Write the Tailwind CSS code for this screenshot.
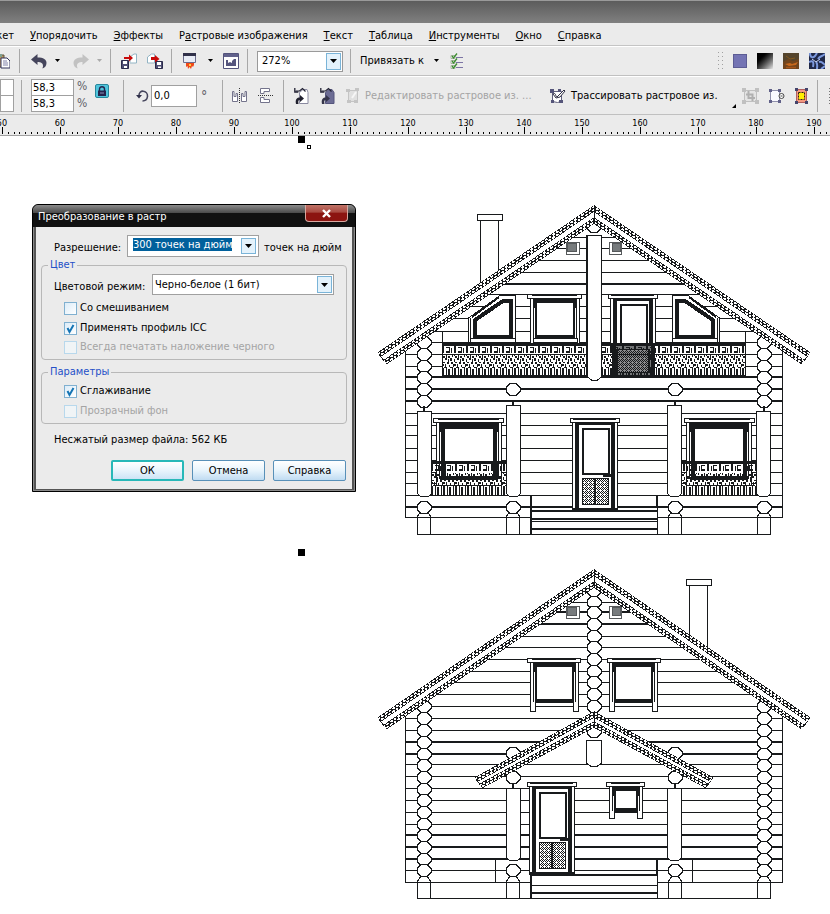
<!DOCTYPE html>
<html lang="ru">
<head>
<meta charset="utf-8">
<title>Преобразование в растр</title>
<script src="https://cdn.jsdelivr.net/npm/@tailwindcss/browser@4"></script>
</head>
<body class="flex min-h-screen flex-col overflow-x-hidden bg-white font-['DejaVu_Sans_Condensed','DejaVu_Sans',sans-serif] text-[11px] leading-4 text-black">
<header class="bg-[#ebebeb]">
  <div class="h-[23px] border-t border-[#9a9a9a] bg-linear-to-b from-[#5c5c5c] to-[#808080]"></div>
  <nav class="flex h-[23px] items-center gap-4 overflow-hidden border-b border-[#c4c4c4] pt-1 whitespace-nowrap" aria-label="Меню">
    <button class="flex w-3.5 justify-end">Макет</button>
    <button><u>У</u>порядочить</button>
    <button><u>Э</u>ффекты</button>
    <button>Р<u>а</u>стровые изображения</button>
    <button><u>Т</u>екст</button>
    <button><u>Т</u>аблица</button>
    <button><u>И</u>нструменты</button>
    <button><u>О</u>кно</button>
    <button><u>С</u>правка</button>
  </nav>

  <div class="flex h-[30px] items-center overflow-hidden border-t border-b border-t-white border-b-[#c0c0c0] whitespace-nowrap">
    <button class="w-[19px]" aria-label="Вставить"><svg class="-ml-1.5" width="16" height="16" viewBox="0 0 16 16"><path d="M1 2h9v12H1z" fill="#b9935c" stroke="#5b5540"/><path d="M3 1h5v3H3z" fill="#7fa08e"/><path d="M7 5h6l3 3v7H7z" fill="#fff" stroke="#33335a"/><path d="M9 8h4M9 10h5M9 12h5" stroke="#8080a8"/></svg></button>
    <span class="h-6 w-px bg-[#a8a8a8]"></span>
    <button class="ml-2.5" aria-label="Отменить"><svg width="18" height="16" viewBox="0 0 18 16"><path d="M1 6.500 7.500 1v3.500c6 0 9 2 9 5.500 0 3-2 5-4 5.500 0-1 .5-1.500.5-2.500C13 10 11 9 7.500 9v3z" fill="#45455c"/></svg></button>
    <button class="ml-1.5 w-3" aria-label="Список отмены"><svg width="7" height="4" viewBox="0 0 7 4"><path d="M1 0h5L3.500 3z"/></svg></button>
    <button class="ml-1.5 text-[#c2c2c2]" aria-label="Повторить"><svg width="18" height="16" viewBox="0 0 18 16"><path d="M17 6.500 10.500 1v3.500c-6 0-9 2-9 5.500 0 3 2 5 4 5.500 0-1-.5-1.500-.5-2.500C5 10 7 9 10.500 9v3z" fill="currentColor"/></svg></button>
    <button class="ml-1.5 w-3" aria-label="Список повтора"><svg width="7" height="4" viewBox="0 0 7 4"><path d="M1 0h5L3.500 3z" fill="#aaa"/></svg></button>
    <span class="ml-0.5 h-6 w-px bg-[#a8a8a8]"></span>
    <button class="ml-2.5" aria-label="Импорт"><svg width="16" height="16" viewBox="0 0 16 16"><path d="M9 9.500V4l4-3h2.500v9H9" fill="#fff" stroke="#92b4c4"/><path d="M.5 7.500h7v8h-7z" fill="#4f4f74" stroke="#2b2b4b"/><path d="M2 8h4v3H2zM3 13h3v2H3z" fill="#fff"/><path d="M3 4h5V1.500L12 5 8 8.500V6H3z" fill="#c80a0a"/></svg></button>
    <button class="ml-2.5" aria-label="Экспорт"><svg width="16" height="16" viewBox="0 0 16 16"><path d="M.5 10V4l4-3h3v9z" fill="#fff" stroke="#92b4c4"/><path d="M8.500 8.500h7v7h-7z" fill="#4f4f74" stroke="#2b2b4b"/><path d="M10 9h4v3h-4zM11 13.500h3v1.500h-3z" fill="#fff"/><path d="M4 4h4V2l4.500 4L8 9.500V7H4z" fill="#c80a0a"/></svg></button>
    <span class="ml-2 h-6 w-px bg-[#a8a8a8]"></span>
    <button class="ml-2.5" aria-label="Запуск приложений"><svg width="16" height="16" viewBox="0 0 16 16"><path d="M1.500.5h12v9h-12z" fill="#e8ecf6" stroke="#6c6c8c"/><path d="M1 0h13v3H1z" fill="#31314a"/><path d="M4 10h8v2l-1 2-1-1-1 3-1.500-2L6 16l-.5-3-1.500 1z" fill="#f04818"/><path d="M7 11h2v2H7z" fill="#ffd040"/></svg></button>
    <button class="ml-1.5 w-3" aria-label="Список приложений"><svg class="mx-auto" width="7" height="4" viewBox="0 0 7 4"><path d="M1 0h5L3.500 3z"/></svg></button>
    <button class="ml-[7px]" aria-label="Экран приветствия"><svg width="16" height="16" viewBox="0 0 16 16"><path d="M.5.500h15v15H.5z" fill="#fff" stroke="#54547c"/><path d="M1 1h14v3H1z" fill="#62628c"/><path d="M3 7h2v3l2-1 2 1V8l2-2h2v7H3z" fill="#55557d"/></svg></button>
    <span class="ml-2 h-6 w-px bg-[#a8a8a8]"></span>
    <label class="relative ml-[9px] flex">
      <select class="h-[21px] w-[86px] appearance-none border border-[#9a9a9a] bg-white pl-1" aria-label="Масштаб"><option>272%</option></select>
      <span class="pointer-events-none absolute top-0.5 right-0.5 grid h-[17px] w-[15px] place-items-center border border-[#7ab4d8] bg-[#e4f2fb]"><svg width="7" height="4" viewBox="0 0 7 4"><path d="M0 0h7L3.500 4z"/></svg></span>
    </label>
    <span class="ml-[7px] h-6 w-px bg-[#a8a8a8]"></span>
    <button class="ml-[9px] flex w-20 items-center justify-between">Привязать к <svg width="7" height="4" viewBox="0 0 7 4"><path d="M1 0h5L3.500 3z"/></svg></button>
    <button class="ml-2.5" aria-label="Параметры"><svg width="14" height="16" viewBox="0 0 14 16"><path d="M6 4.500h7M6 9.500h7M6 14.500h7" stroke="#7c74a4"/><path d="M1 2.500h4v3H1zM1 7.500h4v3H1zM1 12.500h4v3H1z" fill="#fff" stroke="#a8b4a0"/><path d="m2 3 1.500 2L7 .5M2 8l1.500 2L7 5.500M2 13l1.500 2L7 10.500" fill="none" stroke="#3c8c30" stroke-width="1.300"/></svg></button>
    <div class="ml-auto flex items-center pr-[5px]">
      <svg class="mr-2.5" width="5" height="18" viewBox="0 0 5 18"><path d="M.5 0v18M4.500 0v18" stroke="#a0a0a0" stroke-dasharray="1 3"/></svg>
      <button class="mr-2.5 size-3.5 border border-[#5c5c94] bg-[#7474b4]" aria-label="Однородная заливка"></button>
      <button class="mr-2.5 size-4 bg-linear-to-br from-black from-20% to-[#e8e8e8]" aria-label="Градиентная заливка"></button>
      <button class="mr-2.5" aria-label="Заливка узором"><svg width="16" height="16" viewBox="0 0 16 16"><path d="M0 0h16v16H0z" fill="#71441c"/><path d="M0 0h16v6L10 8 5 6 0 9z" fill="#54442c"/><path d="m2 11 5-1 2 1 6-2-2 3-7 1z" fill="#c8681c"/><path d="M3 14.500h10" stroke="#a85418" stroke-width="1.500"/><path d="m3 3 4 3 5-1" stroke="#84581c" fill="none"/></svg></button>
      <button aria-label="Заливка текстурой"><svg width="16" height="16" viewBox="0 0 16 16"><path d="M0 0h16v16H0z" fill="#202848"/><path d="M1 0c0 5 3 5 5 3l2-3M0 9c4-2 5 0 4 5M9 6c2-3 3-2 7-5M10 9c4-1 4 3 6 2M8 16c0-3 1-5-1-7M12 16l4-3" fill="none" stroke="#7c98dc" stroke-width="2"/><path d="M3 6l4 3 4-3" fill="none" stroke="#ccd8fa"/></svg></button>
    </div>
  </div>

  <div class="flex h-[39px] items-center overflow-hidden border-t border-b border-t-white border-b-[#c0c0c0] whitespace-nowrap">
    <div class="flex w-3.5 flex-col">
      <input class="h-[17px] border border-[#a0a0a0] bg-white" aria-label="Ширина">
      <input class="-mt-px h-[17px] border border-[#a0a0a0] bg-white" aria-label="Высота">
    </div>
    <span class="ml-[7px] h-8 w-px bg-[#a8a8a8]"></span>
    <div class="ml-[9px] flex flex-col">
      <input class="h-[17px] w-[43px] border border-[#a0a0a0] bg-white pl-px" value="58,3" aria-label="Масштаб по ширине">
      <input class="-mt-px h-[17px] w-[43px] border border-[#a0a0a0] bg-white pl-px" value="58,3" aria-label="Масштаб по высоте">
    </div>
    <div class="mb-0.5 ml-[3px] w-[18px] text-[12px] leading-[17px] text-[#606068]"><div>%</div><div>%</div></div>
    <button class="mb-2.5 grid size-3.5 place-items-center rounded-xs border border-[#28889c] bg-[#50c4dc]" aria-label="Сохранять пропорции"><svg width="10" height="10" viewBox="0 0 10 10"><path d="M1 4.500h8V10H1z" fill="#24244c"/><path d="M2.500 5V3a2.500 2.300 0 0 1 5 0v2" fill="none" stroke="#24244c" stroke-width="1.400"/><path d="M3 7h4" stroke="#8890b8"/></svg></button>
    <span class="ml-3.5 h-8 w-px bg-[#a8a8a8]"></span>
    <svg class="ml-3" width="13" height="14" viewBox="0 0 13 14"><path d="M3 7c-.5-7 9-6 8.500.5C11 11 8.500 12 6.500 12" fill="none" stroke="#45455c" stroke-width="1.600"/><path d="M0 6h6L3 9.500z" fill="#30304a"/></svg>
    <input class="ml-0.5 h-[22px] w-[46px] border border-[#a0a0a0] bg-white pl-0.5" value="0,0" aria-label="Угол поворота">
    <span class="ml-1 w-[21px] text-[14px] text-[#606068]">°</span>
    <span class="h-8 w-px bg-[#a8a8a8]"></span>
    <button class="ml-[9px]" aria-label="Отразить по горизонтали"><svg width="16" height="16" viewBox="0 0 16 16"><path d="M7.500 0v16" stroke="#333" stroke-dasharray="1 1"/><path d="M.5 3.500H2v5h2v-3h1.500v8h-5zM14.500 3.500H13v5h-2v-3H9.500v8h5z" fill="#fff" stroke="#74748c"/></svg></button>
    <button class="ml-2.5" aria-label="Отразить по вертикали"><svg width="16" height="16" viewBox="0 0 16 16"><path d="M0 7.500h16" stroke="#333" stroke-dasharray="1 1"/><path d="M2.500.5h9v3H6v2H2.500zM2.500 9.500H6v2h5.500v3h-9z" fill="#fff" stroke="#74748c"/></svg></button>
    <span class="ml-[9px] h-8 w-px bg-[#a8a8a8]"></span>
    <button class="ml-2.5" aria-label="Преобразовать"><svg width="16" height="18" viewBox="0 0 16 18"><path d="M5.500 5.500 9 2.500h4l1 3v11H5.500z" fill="#fff" stroke="#8a8aa0"/><path d="m1.500 4 4 0 3-2.500 3 3" fill="none" stroke="#222234" stroke-width="1.200"/><path d="M.8 1v4h3.500" fill="none" stroke="#222234" stroke-width="1.300"/><path d="M2 17c-1-5 1-6.500 4-6.500V8l4 3.500L6 15v-2c-2 0-2 1-1.500 4z" fill="#20202e"/></svg></button>
    <button class="ml-2.5" aria-label="В растр"><svg width="16" height="18" viewBox="0 0 16 18"><path d="M5.500 5.500 9 2.500h3l2 3v11H5.500z" fill="#6c6c94" stroke="#55557c"/><path d="m1.500 4 4 0 3-2.500 3 3" fill="none" stroke="#222234" stroke-width="1.200"/><path d="M.8 1v4h3.500" fill="none" stroke="#222234" stroke-width="1.300"/><path d="M2 17c-1-5 1-6.500 4-6.500V8l4 3.500L6 15v-2c-2 0-2 1-1.500 4z" fill="#35354a"/></svg></button>
    <button class="ml-2.5 flex w-[190px] items-center gap-1 text-[#a4a4a4]"><svg width="15" height="16" viewBox="0 0 15 16"><path d="M2.500 2.500h9v11h-9z" fill="#e0e0e0" stroke="#c4c4c4"/><path d="M0 1h4v3H0zM9 0h4v3H9zM1 12h4v3H1zM8 12h4v3H8z" fill="#c4c4c4"/><path d="m6 10 4-6" stroke="#f6f6f6" stroke-width="2"/></svg>Редактировать растровое из. ...</button>
    <button class="ml-[13px] flex items-center gap-1"><svg width="18" height="18" viewBox="0 0 18 18"><path d="M3.500 4.500h9v10l-4 1-5-1z" fill="#fff" stroke="#60607c"/><path d="M1 2h4v4H1zM9 2h3v3H9zM2 13h3v3H2zM10 13h4v3h-4z" fill="#55557a"/><path d="M4 7c3-2 2 2 4 3l7-7 1 1-5 6-4 1z" fill="#fff" stroke="#303044"/></svg>Трассировать растровое из.</button>
    <div class="ml-auto flex items-center">
      <svg class="mt-5 mr-1.5" width="4" height="4" viewBox="0 0 4 4"><path d="M4 0v4H0z"/></svg>
      <button class="mr-2.5" aria-label="Обрезать"><svg width="17" height="16" viewBox="0 0 17 16"><path d="M2.500 2.500h12v11h-12z" fill="#e4e4e4" stroke="#c0c0c0"/><path d="M0 0h4v4H0zM13 0h4v4h-4zM0 12h4v4H0zM13 12h4v4h-4z" fill="#c0c0c0"/><path d="M6.500 3v7H13M4 6.500h6.500V13" fill="none" stroke="#b0b0b0" stroke-width="2"/></svg></button>
      <button class="mr-2.5" aria-label="Цветовая маска"><svg width="16" height="16" viewBox="0 0 16 16"><path d="M1.500 2.500h9v11h-9z" fill="#fafaff" stroke="#9090ac"/><path d="M0 1h3v3H0zM9 1h3v3H9zM0 12h3v3H0zM9 12h3v3H9z" fill="#606088"/><path d="M12.500 5.500a2.500 2.500 0 1 1 0 5 2.500 2.500 0 0 1 0-5m-1 2.500h2" fill="#fff" stroke="#444"/></svg></button>
      <button class="mr-[9px]" aria-label="Контур"><svg width="13" height="16" viewBox="0 0 13 16"><path d="M1.500 1.500h10v13h-10z" fill="#f49880" stroke="#b06060"/><path d="M0 0h3v3H0zM10 0h3v3h-3zM0 13h3v3H0zM10 13h3v3h-3z" fill="#44446c"/><path d="M3.500 4.500h6v7h-6z" fill="#ffee00" stroke="#302010" stroke-dasharray="2 1"/></svg></button>
      <span class="h-8 w-px bg-[#a8a8a8]"></span>
      <svg class="ml-[11px]" width="1" height="16" viewBox="0 0 1 16"><path d="M.5 0v16" stroke="#777" stroke-dasharray="1 2"/></svg>
    </div>
  </div>
  <div class="h-[21px] overflow-hidden border-b border-[#a0a0a0]">
    <svg id="ruler" class="block text-[9px]" width="1640" height="20" viewBox="0 0 1640 20" shape-rendering="crispEdges" aria-label="Линейка"></svg>
  </div>
</header>

<main class="relative flex-1 overflow-hidden">
  <svg id="drawing" class="block" width="830" height="776" viewBox="0 136 830 776" aria-label="Фасады дома"></svg>

  <section role="dialog" aria-labelledby="dlg" class="absolute top-[68px] left-8 w-[324px] rounded-t-md border border-black bg-[#555] pb-0.5 whitespace-nowrap shadow-[inset_0_0_0_1px_#8a8a8a]">
    <div class="flex h-[22px] justify-between rounded-t-md bg-linear-to-b from-[#8c8c8c] via-[#4c4c4c] via-35% to-[#111] to-36% pl-[5px] text-white">
      <h1 id="dlg" class="mt-1">Преобразование в растр</h1>
      <button class="mr-[7px] grid h-[17px] w-[43px] place-items-center rounded-b-sm border border-t-0 border-[#d8a8a0] bg-linear-to-b from-[#c07468] via-[#a84840] via-45% to-[#8c1410] to-50%" aria-label="Закрыть"><svg width="11" height="9" viewBox="0 0 11 9"><path d="m2 1 7 7m0-7-7 7" stroke="#fff" stroke-width="2.400"/></svg></button>
    </div>
    <form class="mx-[3px] bg-[#ebebeb] px-[5px] pt-2 pb-2">
      <div class="flex h-[22px] items-center pl-[13px]">
        <label for="res" class="mt-1 w-[73px]">Разрешение:</label>
        <div class="flex h-[22px] w-[132px] border border-[#a0a0a0] bg-white p-0.5">
          <input id="res" class="ml-[3px] h-[13px] w-[99px] bg-[#00609c] text-white outline-none" value="300 точек на дюйм">
          <button type="button" class="ml-auto grid h-4 w-[15px] place-items-center border border-[#7ab4d8] bg-[#e4f2fb]" aria-label="Список разрешений"><svg width="7" height="4" viewBox="0 0 7 4"><path d="M0 0h7L3.500 4z"/></svg></button>
        </div>
        <span class="mt-1 ml-[5px]">точек на дюйм</span>
      </div>
      <fieldset class="h-[103px] rounded border border-[#b8b8b8] pl-3">
        <legend class="-ml-1.5 px-0.5 text-[#2450c8]">Цвет</legend>
        <div class="mt-px flex items-center gap-2">
          <label for="mode" class="w-[90px] pt-1">Цветовой режим:</label>
          <div class="relative flex">
            <select id="mode" class="h-[21px] w-[182px] appearance-none border border-[#a0a0a0] bg-white pl-0.5"><option>Черно-белое (1 бит)</option></select>
            <span class="pointer-events-none absolute top-0.5 right-0.5 grid h-[17px] w-[15px] place-items-center border border-[#7ab4d8] bg-[#e4f2fb]"><svg width="7" height="4" viewBox="0 0 7 4"><path d="M0 0h7L3.500 4z"/></svg></span>
          </div>
        </div>
        <label class="mt-[5px] ml-2.5 flex h-4 items-center gap-[3px]"><input type="checkbox" class="size-[13px] appearance-none border border-[#80b0d0] bg-linear-to-br from-[#dcecf8] to-white">Со смешиванием</label>
        <label class="mt-1 ml-2.5 flex h-4 items-center gap-[3px]"><span class="grid"><input type="checkbox" checked class="col-start-1 row-start-1 size-[13px] appearance-none border border-[#80b0d0] bg-linear-to-br from-[#dcecf8] to-white"><svg class="pointer-events-none col-start-1 row-start-1" width="13" height="13" viewBox="0 0 13 13"><path d="m3.500 6 2 4 4-7" fill="none" stroke="#1474b4" stroke-width="2"/></svg></span>Применять профиль ICC</label>
        <label class="mt-[3px] ml-2.5 flex h-4 items-center gap-[3px] text-[#a4a4a4]"><input type="checkbox" disabled class="size-[13px] appearance-none border border-[#b8d8ec] bg-[#f0f4f6]">Всегда печатать наложение черного</label>
      </fieldset>
      <fieldset class="mt-1 h-[60px] rounded border border-[#b8b8b8] pl-3">
        <legend class="-ml-1.5 px-0.5 text-[#2450c8]">Параметры</legend>
        <label class="mt-[3px] ml-2.5 flex h-4 items-center gap-[3px]"><span class="grid"><input type="checkbox" checked class="col-start-1 row-start-1 size-[13px] appearance-none border border-[#80b0d0] bg-linear-to-br from-[#dcecf8] to-white"><svg class="pointer-events-none col-start-1 row-start-1" width="13" height="13" viewBox="0 0 13 13"><path d="m3.500 6 2 4 4-7" fill="none" stroke="#1474b4" stroke-width="2"/></svg></span>Сглаживание</label>
        <label class="mt-1 ml-2.5 flex h-4 items-center gap-[3px] text-[#a4a4a4]"><input type="checkbox" disabled class="size-[13px] appearance-none border border-[#b8d8ec] bg-[#f0f4f6]">Прозрачный фон</label>
      </fieldset>
      <p class="mt-2 pl-[13px]">Несжатый размер файла: 562 КБ</p>
      <div class="mt-3 flex justify-end gap-2 pr-px">
        <button type="button" class="h-[21px] w-[73px] rounded-xs border-2 border-[#28b8b8] bg-linear-to-b from-white via-[#e8f4fc] via-50% to-[#cce4f6]">ОК</button>
        <button type="button" class="h-[21px] w-[73px] rounded-xs border border-[#5890b8] bg-linear-to-b from-white via-[#e8f4fc] via-50% to-[#c0dcf2]">Отмена</button>
        <button type="button" class="h-[21px] w-[73px] rounded-xs border border-[#5890b8] bg-linear-to-b from-white via-[#e8f4fc] via-50% to-[#c0dcf2]">Справка</button>
      </div>
    </form>
  </section>
</main>

<script>
// Ruler: one tick per millimetre, a label every ten
let r = '';
for (let u = 49; u < 330; u++) {
  const x = Math.round(2 + (u - 50) * 5.8), major = u % 10 === 0;
  r += `<path d="M${x + .5} ${major ? 12 : 17}V19" stroke="#000"/>`;
  if (major) r += `<text x="${x}" y="11" text-anchor="middle">${u}</text>`;
}
document.getElementById('ruler').innerHTML = r;

const INK = '#181a1c', AXIS = 594;
const out = [];
const add = s => out.push(s);
const rect = (x1, y1, x2, y2, w = 1, fill = '#fff', ink = INK) =>
  add(`<rect x="${x1 + .5}" y="${y1 + .5}" width="${x2 - x1}" height="${y2 - y1}" fill="${fill}" stroke="${ink}" stroke-width="${w}"/>`);
const path = (d, w = 1, fill = 'none') => add(`<path d="${d}" fill="${fill}" stroke="${INK}" stroke-width="${w}"/>`);
const h = (x1, x2, y, w = 1) => add(`<path d="M${x1} ${w === 2 ? y : y + .5}H${x2}" stroke="${INK}" stroke-width="${w}"/>`);
const v = (x, y1, y2, w = 1) => add(`<path d="M${w === 2 ? x : x + .5} ${y1}V${y2}" stroke="${INK}" stroke-width="${w}"/>`);
const log = (x, y) => path(`M${x - 3} ${y - 5.5}h6l4 4v4l-4 4h-6l-4-4v-4z`, 1, '#fff');
const mirror = f => { f(); add(`<g transform="matrix(-1 0 0 1 ${AXIS * 2} 0)">`); f(); add('</g>'); };

function siding(lines, thick, top, slope, eave) {
  for (const y of lines) {
    const half = y < eave ? (y - top) / slope : 189;
    h(AXIS - Math.min(half, 189), AXIS + Math.min(half, 189), y, thick.includes(y) ? 2 : 1);
  }
}
// Two rows of round tiles on each edge of a sloping rafter
function roof(ay, ex, ey, wide) {
  const P = dy => `M${ex + dy * .5} ${ey + dy * .62}L${AXIS} ${ay + dy}L${AXIS * 2 - ex - dy * .5} ${ey + dy * .62}`;
  path(`M${ex} ${ey}L${AXIS} ${ay}L${AXIS * 2 - ex} ${ey}l-7 9L${AXIS} ${ay + wide}L${ex + 7} ${ey + 9}z`, 1, '#fff');
  for (const [dy, off] of [[1, 0], [4, 2], [wide - 3, 1], [wide, 3]]) {
    add(`<path d="${P(dy)}" fill="none" stroke="${INK}" stroke-width="3"/>`);
    add(`<path d="${P(dy)}" fill="none" stroke="#fff" stroke-width="1.800" stroke-linecap="round" stroke-dasharray="1.200 3.200" stroke-dashoffset="${off}"/>`);
  }
  v(AXIS, ay - 1, ay + wide + 2);
}
function vent(y) {
  rect(566, y, 579, y + 12, 1, '#fff', '#55585a'); rect(567, y + 1, 576, y + 9, 1, '#777b7d', '#55585a');
  rect(609, y, 621, y + 12, 1, '#fff', '#55585a'); rect(612, y + 1, 620, y + 9, 1, '#777b7d', '#55585a');
}
function chimney(x, y, bottom) { rect(x + 3, y + 6, x + 21, bottom); rect(x, y, x + 25, y + 6); }
function squareWindow(x1, y1, x2, y2, legs, frame) {
  rect(x1 + 1, y1 + 4, x2 - 1, y2 + (legs ? 0 : 6));
  if (legs) { rect(x1 + 1, y1 + 4, x1 + 6, y2 + legs); rect(x2 - 6, y1 + 4, x2 - 1, y2 + legs); }
  add(`<rect x="${x1 + 4}" y="${y1 + 4}" width="${x2 - x1 - 7}" height="${y2 - y1 - 4}" fill="${INK}"/>`);
  add(`<rect x="${x1 + 4 + frame}" y="${y1 + 5 + frame}" width="${x2 - x1 - 7 - frame * 2}" height="${y2 - y1 - 8 - frame}" fill="#fff"/>`);
  add(`<path d="M${x1 + 5.500} ${y1 + 14}V${y2}M${x2 - 4.500} ${y1 + 14}V${y2}" stroke="#fff"/>`);
  rect(x1 - 2, y1, x2 + 1, y1 + 4); h(x1 + 3, x2 - 3, y1 + 1, 2);
}
function door(x, y, bottom, panel = true) {
  rect(x, y + 4, x + 45, bottom);
  add(`<path d="M${x + 5} ${y + 5}V${bottom}M${x + 41} ${y + 5}V${bottom}" stroke="${INK}" stroke-width="4"/>`);
  h(x, x + 45, bottom - 1, 2); h(x + 4, x + 42, y + 6, 2);
  rect(x - 2, y, x + 47, y + 4); h(x + 1, x + 44, y + 1, 2);
  rect(x + 10, y + 10, x + 36, y + 55, 2);
  if (!panel) return;
  h(x + 31, x + 41, y + 57, 3);
  rect(x + 10, y + 60, x + 36, y + 86, 1, 'url(#weave)'); v(x + 23, y + 60, y + 86, 2);
}
function post(x, y1, y2) {
  v(x + 7, y1 - 5, y1, 2);
  path(`M${x + .5} ${y1 + .5}h14v${y2 - y1 - 2}l-3 3h-8l-3-3z`, 1, '#fff');
}
function foot(x, y, base, floor) {
  rect(x, base, x + 13, floor);
  path(`M${x} ${base}l4-6h6l4 6`, 1, '#fff'); log(x + 7, y);
}

const balusters = `<path d="M0 0h2v7H0zM4 1h3v1H4zM4 5h3v2H4zM7 1h1v6H7zM9 2h1v5H9zM0 9h1v1H0zM1 10h2v2H1zM4 9h1v3H4zM6 10h2v2H6zM10 9h1v2h-1zM0 13h1v3H0zM3 12h2v2H3zM6 13h1v3H6zM8 12h2v3H8zM1 16h2v1H1zM5 16h2v2H5zM9 16h2v2H9zM0 18h2v2H0zM3 18h1v3H3zM7 19h1v2H7zM11 18h1v3h-1zM0 22h2v9H0zM4 21h1v10H4zM6 23h2v8H6zM10 21h1v10h-1zM2 21h2v1H2zM8 21h2v1H8z" fill="${INK}"/>`;
add(`<defs>
 <pattern id="weave" width="4" height="4" patternUnits="userSpaceOnUse"><path d="M0 0h4v4H0z" fill="#fff"/><path d="M0 0h1v1H0zM1 1h1v1H1zM2 2h1v1H2zM3 3h1v1H3zM3 1h1v1H3zM1 3h1v1H1zM2 0h1v1H2z" fill="${INK}"/></pattern>
 <pattern id="balcony" x="442" y="346" width="12" height="31" patternUnits="userSpaceOnUse"><path d="M0 0h12v31H0z" fill="#fff"/>${balusters}</pattern>
 <pattern id="porch" x="431" y="464" width="12" height="31" patternUnits="userSpaceOnUse">${balusters}</pattern>
</defs><g shape-rendering="crispEdges">`);

// ---- Front elevation
chimney(477, 214, 285);
siding([237,248,260,272,284,294,306,318,331,342,354,366,377,389,401,413,425,435,448,460,472,483,495,507,517],
       [284,377,389,401,507], 217, .69, 346);
v(405, 349, 517); v(782, 349, 517);
h(417, 771, 534);
mirror(() => {
  for (const y of [342,354,366,377,389,401]) log(424, y);
  path('M468.500 342V318L500 295.500H515.500V342z', 1, '#fff');
  v(470, 318, 342);
  path('M475 337V320L503 301H511V337z', 4, '#fff');
  path('M472 317l27-20', 2);
  rect(470, 338, 515, 342);
});
squareWindow(529, 294, 580, 338, 0, 4); rect(533, 338, 577, 342);
door(610, 294, 377, false);
vent(242);
add('<rect x="442" y="346" width="304" height="31" fill="url(#balcony)"/>');
add('<rect x="612" y="346" width="43" height="31" fill="#181a1c" fill-opacity=".6"/>');
add('<rect x="616" y="349" width="34" height="24" fill="#181a1c"/><rect x="618" y="350" width="30" height="22" fill="url(#weave)" opacity=".5"/>');
v(613, 346, 377, 4); v(652, 346, 377, 4);
h(442, 746, 344, 3); h(442, 746, 376, 2); h(442, 746, 354); v(442, 331, 377); v(745, 331, 377);
path('M587.500 235.500H601.500V377l-4 3h-6l-4-3z', 1, '#fff'); v(587, 235, 377, 2);
log(594, 226);
mirror(() => {
  log(513, 389);
  squareWindow(435, 418, 502, 479, 0, 6);
  add('<rect x="431" y="464" width="75" height="31" fill="url(#porch)"/>');
  v(443, 464, 480, 4); v(495, 464, 480, 4); h(440, 497, 478, 3);
  h(431, 508, 462, 3); h(431, 506, 495);
  post(417, 411, 495); post(506, 405, 495);
  h(405, 531, 517);
  foot(417, 507, 517, 534); foot(506, 507, 517, 534);
  v(531, 495, 534, 2); v(519, 517, 534);
});
add('<rect x="532" y="508" width="125" height="26" fill="#fff"/>');
h(531, 657, 511, 2); h(531, 657, 519, 2); h(531, 657, 521); h(531, 657, 529, 2); h(531, 657, 534);
door(572, 418, 510);
roof(206, 378, 353, 16);

// ---- Rear elevation
chimney(686, 579, 650);
siding([602,612,624,636,647,659,671,682,694,706,718,730,742,754,764,776,788,800,812,824,835,847,859,870,882],
       [612,624,742,754,835,847,859], 582, .69, 712);
v(405, 714, 882); v(782, 714, 882);
h(417, 771, 898);
for (const y of [590,602,612,624,636,647,659,671,682,694,706]) log(594, y);
mirror(() => {
  for (const y of [706,718,730,742,754,765,777,789,800,812,824,835,847,859,870]) log(424, y);
  squareWindow(529, 658, 579, 702, 9, 4);
  log(513, 753);
});
vent(606);
path('M482 788L594 722L706 788z', 0, '#fff');
h(506, 682, 764); h(497, 691, 776); h(480, 708, 788);
roof(570, 378, 718, 16);
path('M586.500 740.500H601.500V763l-4 3h-7l-4-3z', 1, '#fff'); log(594, 731);
mirror(() => {
  log(513, 777);
  add('<rect x="496" y="860" width="35" height="22" fill="#fff"/>');
  h(495, 531, 859); h(495, 531, 870); h(495, 531, 882); v(495, 859, 882); v(531, 859, 898, 2);
  post(506, 788, 859); foot(506, 870, 882, 898); foot(417, 870, 882, 898); v(519, 882, 898);
});
add('<rect x="532" y="874" width="125" height="24" fill="#fff"/>');
h(531, 657, 875, 2); h(531, 657, 885); h(531, 657, 893, 2); h(531, 657, 898);
door(529, 782, 874);
squareWindow(608, 782, 643, 811, 7, 4);
roof(712, 475, 778, 14);

// ---- Selection handles
add('<path d="M298 136h7v7h-7zM298 549h7v7h-7z"/><path d="M307.500 145.500h3v3h-3z" fill="#fff" stroke="#000"/></g>');
document.getElementById('drawing').innerHTML = out.join('');
</script>
</body>
</html>
